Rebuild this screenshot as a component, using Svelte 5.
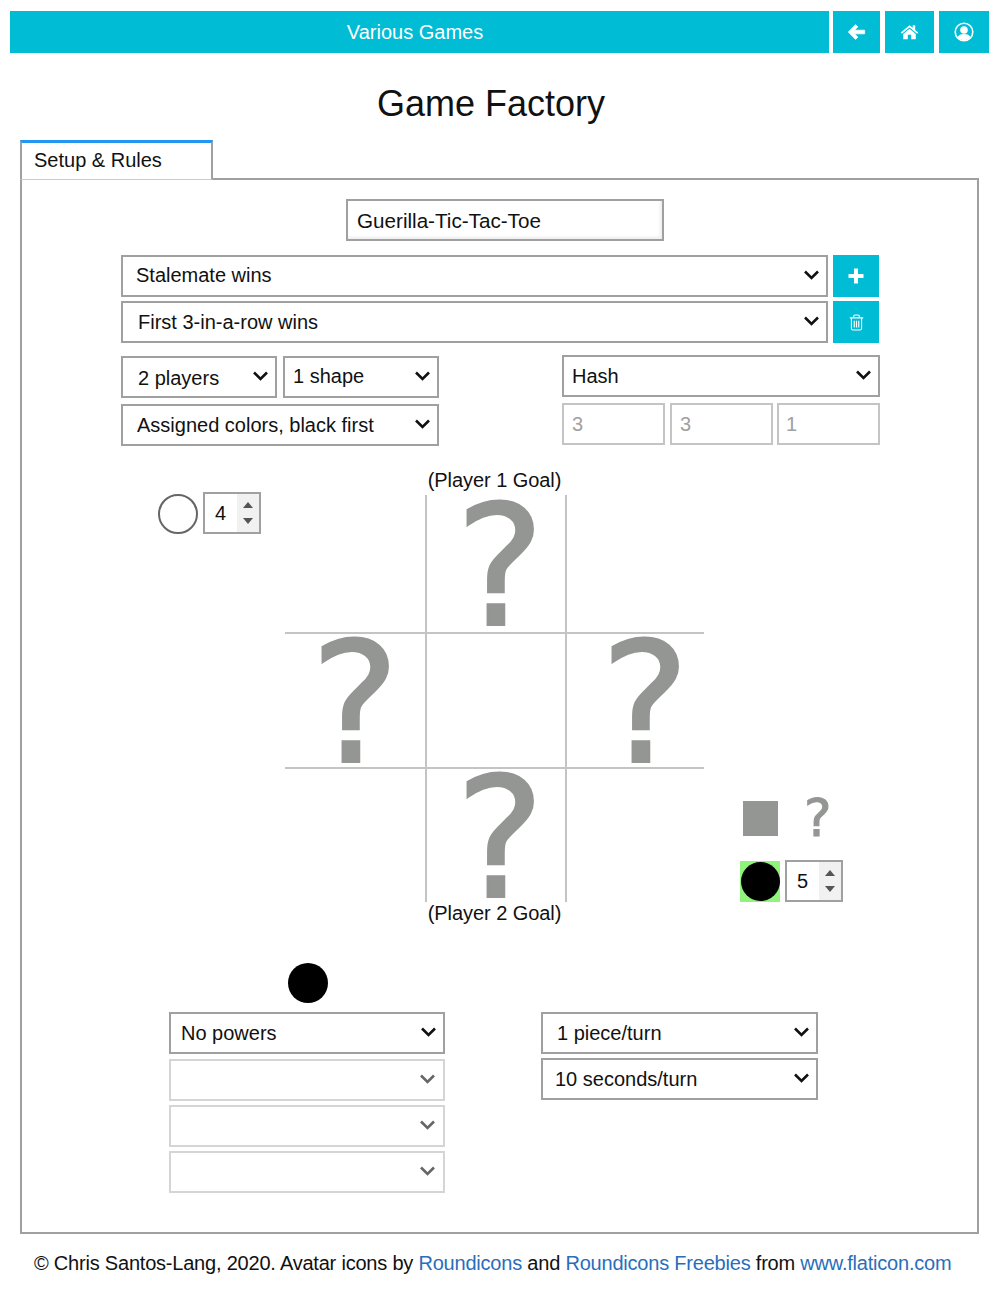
<script>
	const cells = [false, true, false, true, false, true, false, true, false];
</script>

{#snippet chevron()}
	<svg class="chevron" viewBox="0 0 16 10" aria-hidden="true">
		<polyline points="1.5,1.5 8,8 14.5,1.5" />
	</svg>
{/snippet}

{#snippet dropdown(value, cls = '', disabled = false)}
	<div class="dropdown {cls}" class:off={disabled}>
		<select {disabled}>
			<option>{value}</option>
		</select>
		{@render chevron()}
	</div>
{/snippet}

{#snippet spinner(value)}
	<div class="spinner">
		<span class="spin-value">{value}</span>
		<span class="spin-arrows">
			<svg viewBox="0 0 10 6" aria-hidden="true"><polygon points="5,0 10,6 0,6" /></svg>
			<svg viewBox="0 0 10 6" aria-hidden="true"><polygon points="0,0 10,0 5,6" /></svg>
		</span>
	</div>
{/snippet}

<div class="page">
	<header class="topbar">
		<div class="bar-title">Various Games</div>
		<button class="bar-btn first" aria-label="Back">
			<svg viewBox="0 0 20 18" width="19" height="18">
				<path d="M9 1.2 1.4 9 9 16.8 11.4 14.4 8 10.9H18.6V7.1H8L11.4 3.6Z" fill="#fff" stroke="#fff" stroke-width="0.8" stroke-linejoin="round" />
			</svg>
		</button>
		<button class="bar-btn second" aria-label="Home">
			<svg viewBox="0 0 20 16" width="19" height="16">
				<path d="M10 0.8 0.8 8.4 2 9.8 10 3.2 18 9.8 19.2 8.4 16 5.8V1H13.4V3.6Z" fill="#fff" />
				<path d="M3.4 10 10 4.6 16.6 10V15.6H11.8V11H8.2V15.6H3.4Z" fill="#fff" />
			</svg>
		</button>
		<button class="bar-btn third" aria-label="Account">
			<svg viewBox="0 0 20 20" width="20" height="20">
				<circle cx="10" cy="10" r="8.8" fill="none" stroke="#fff" stroke-width="1.6" />
				<circle cx="10" cy="8" r="3.8" fill="#fff" />
				<path d="M3.6 15.2C5 12.6 7.4 12 10 12S15 12.6 16.4 15.2C14.8 17.2 12.6 18.2 10 18.2S5.2 17.2 3.6 15.2Z" fill="#fff" />
			</svg>
		</button>
	</header>

	<h1>Game Factory</h1>

	<div class="tab">Setup &amp; Rules</div>

	<main class="panel">
		<div class="name-row">
			<input class="name" value="Guerilla-Tic-Tac-Toe" readonly />
		</div>

		<div class="rule-rows">
			{@render dropdown('Stalemate wins', 'pad-a up')}
			<button class="square-btn" aria-label="Add rule">
				<svg viewBox="0 0 16 16" width="16" height="16">
					<path d="M6 0.5H10V6H15.5V10H10V15.5H6V10H0.5V6H6Z" fill="#fff" />
				</svg>
			</button>
			{@render dropdown('First 3-in-a-row wins', 'pad-b')}
			<button class="square-btn" aria-label="Delete rule">
				<svg viewBox="0 0 16 18" width="15" height="17" fill="none" stroke="#fff" stroke-width="1.2">
					<path d="M0.8 4H15.2M5 4V2.4Q5 1 6.4 1H9.6Q11 1 11 2.4V4" />
					<path d="M2.6 4V15.4Q2.6 17 4.2 17H11.8Q13.4 17 13.4 15.4V4" />
					<path d="M5.6 7V14.4M8 7V14.4M10.4 7V14.4" />
				</svg>
			</button>
		</div>

		<div class="setup">
			<div class="setup-left">
				{@render dropdown('2 players', 'pad-b low')}
				{@render dropdown('1 shape', 'pad-c up')}
				{@render dropdown('Assigned colors, black first', 'wide pad-d')}
			</div>
			<div class="setup-right">
				{@render dropdown('Hash', 'wide pad-c')}
				<input class="size" value="3" disabled />
				<input class="size" value="3" disabled />
				<input class="size" value="1" disabled />
			</div>
		</div>

		<section class="game">
			<div class="side-left">
				<span class="piece hollow"></span>
				{@render spinner(4)}
			</div>

			<div class="board-wrap">
				<div class="goal top">(Player 1 Goal)</div>
				<div class="board">
					{#each cells as mark}
						<div class="cell">
							{#if mark}<span class="mark">?</span>{/if}
						</div>
					{/each}
				</div>
				<div class="goal bottom">(Player 2 Goal)</div>
			</div>

			<div class="side-right">
				<div class="shape-row">
					<span class="square"></span>
					<span class="small-mark">?</span>
				</div>
				<div class="count-row">
					<span class="green"><span class="piece solid"></span></span>
					{@render spinner(5)}
				</div>
			</div>
		</section>

		<div class="powers-piece"><span class="piece solid"></span></div>

		<section class="options">
			<div class="stack powers">
				{@render dropdown('No powers', 'pad-e')}
				{@render dropdown('', '', true)}
				{@render dropdown('', '', true)}
				{@render dropdown('', '', true)}
			</div>
			<div class="stack">
				{@render dropdown('1 piece/turn', 'pad-f')}
				{@render dropdown('10 seconds/turn', 'pad-g')}
			</div>
		</section>
	</main>

	<footer>
		© Chris Santos-Lang, 2020. Avatar icons by <a href="#top">Roundicons</a> and
		<a href="#top">Roundicons Freebies</a> from <a href="#top">www.flaticon.com</a>
	</footer>
</div>

<style>
	:global(body) {
		background: #fff;
	}

	.page {
		width: 998px;
		height: 1293px;
		box-sizing: border-box;
		padding-top: 11px;
		font-family: 'Liberation Sans', Arial, sans-serif;
		font-size: 20px;
		color: #111;
		overflow: hidden;
	}

	.topbar {
		display: flex;
		height: 42px;
		margin: 0 9px 0 10px;
	}

	.bar-title {
		width: 819px;
		background: #00bcd4;
		color: #fff;
		display: flex;
		align-items: center;
		justify-content: center;
		padding-right: 9px;
		box-sizing: border-box;
	}

	.bar-btn,
	.square-btn {
		background: #00bcd4;
		border: none;
		padding: 0;
		display: flex;
		align-items: center;
		justify-content: center;
	}

	.bar-btn.first {
		width: 47px;
		margin-left: 4px;
	}

	.bar-btn.second {
		width: 49px;
		margin-left: 5px;
	}

	.bar-btn.third {
		width: 50px;
		margin-left: 5px;
	}

	h1 {
		margin: 29px 0 0;
		padding-right: 16px;
		font-size: 36px;
		font-weight: 400;
		line-height: 44px;
		text-align: center;
		color: #111;
	}

	.tab {
		width: 193px;
		height: 40px;
		margin: 14px 0 -2px 20px;
		box-sizing: border-box;
		position: relative;
		z-index: 1;
		background: #fff;
		border-top: 3px solid #2196f3;
		border-left: 2px solid #a0a0a0;
		border-right: 2px solid #a0a0a0;
		border-bottom: 1px solid #ccc;
		padding: 4px 0 0 12px;
		line-height: 26px;
	}

	.panel {
		width: 959px;
		height: 1056px;
		margin-left: 20px;
		box-sizing: border-box;
		border: 2px solid #a0a0a0;
		padding-top: 19px;
	}

	.name-row {
		display: flex;
		padding-left: 324px;
	}

	input,
	select {
		font: inherit;
		color: #111;
		background: #fff;
		box-sizing: border-box;
		border-radius: 0;
		outline: none;
	}

	.name {
		width: 318px;
		height: 42px;
		border: 2px solid #a0a0a0;
		padding: 2px 9px 0;
		font-size: 20.65px;
		box-shadow: inset -2px -2px 3px #eee;
	}

	.rule-rows {
		display: grid;
		grid-template-columns: 707px 46px;
		column-gap: 5px;
		row-gap: 4px;
		margin: 14px 0 0 99px;
	}

	.square-btn {
		height: 42px;
	}

	.dropdown {
		position: relative;
		height: 42px;
	}

	.dropdown select {
		width: 100%;
		height: 100%;
		appearance: none;
		border: 2px solid #a0a0a0;
		padding: 0 30px 0 9px;
	}

	.dropdown.off select {
		border-color: #c4c4c4;
	}

	.chevron {
		position: absolute;
		right: 8px;
		top: 15px;
		width: 17px;
		height: 10px;
		pointer-events: none;
	}

	.chevron polyline {
		fill: none;
		stroke: #111;
		stroke-width: 2.6;
	}

	.dropdown.off .chevron {
		right: 9px;
	}

	.dropdown.off .chevron polyline {
		stroke: #666;
	}

	.pad-a select { padding-left: 13px; }
	.pad-b select { padding-left: 15px; }
	.pad-c select { padding-left: 8px; }
	.pad-d select { padding-left: 14px; }
	.pad-e select { padding-left: 10px; }
	.pad-f select { padding-left: 14px; }
	.pad-g select { padding-left: 12px; }

	.low select {
		padding-top: 2px;
	}

	.up select {
		padding-bottom: 2px;
	}

	.setup {
		display: flex;
		margin: 12px 0 0 99px;
	}

	.setup-left {
		display: grid;
		grid-template-columns: 156px 156px;
		column-gap: 6px;
		row-gap: 6px;
		width: 318px;
		margin-top: 1px;
	}

	.setup-left .wide {
		grid-column: 1 / 3;
	}

	.setup-right {
		display: grid;
		grid-template-columns: 103px 103px 103px;
		column-gap: 5px;
		row-gap: 6px;
		margin-left: 123px;
		align-content: start;
	}

	.setup-right .wide {
		grid-column: 1 / 4;
		width: 318px;
	}

	.size {
		height: 42px;
		width: 100%;
		border: 2px solid #c4c4c4;
		padding: 0 9px 0 8px;
	}

	.size:last-child {
		margin-left: -1px;
		padding-left: 7px;
	}

	.size:disabled {
		color: #a0a0a0;
		background: #fff;
	}

	.game {
		display: grid;
		grid-template-columns: 263px 419px 1fr;
		margin-top: 23px;
	}

	.side-left {
		display: flex;
		align-items: flex-end;
		gap: 5px;
		padding: 23px 0 0 136px;
		align-self: start;
	}

	.piece {
		display: block;
		width: 40px;
		height: 40px;
		box-sizing: border-box;
		border-radius: 50%;
		flex: none;
	}

	.piece.hollow {
		border: 2px solid #666;
		background: #fff;
	}

	.piece.solid {
		background: #000;
	}

	.spinner {
		display: flex;
		width: 58px;
		height: 42px;
		box-sizing: border-box;
		border: 2px solid #a0a0a0;
		flex: none;
	}

	.spin-value {
		flex: 1;
		padding-left: 10px;
		line-height: 38px;
	}

	.spin-arrows {
		width: 22px;
		background: #f1f1f1;
		display: flex;
		flex-direction: column;
		align-items: center;
		justify-content: center;
		gap: 10px;
	}

	.spin-arrows svg {
		width: 10px;
		height: 6px;
		fill: #555;
		display: block;
	}

	.board-wrap {
		display: flex;
		flex-direction: column;
	}

	.goal {
		line-height: 22px;
		height: 22px;
		text-align: center;
		letter-spacing: -0.05px;
	}

	.goal.top {
		margin-bottom: 4px;
	}

	.board {
		display: grid;
		grid-template-columns: 140px 142px 137px;
		grid-template-rows: 139px 133px 135px;
	}

	.cell {
		display: flex;
		align-items: center;
		justify-content: center;
		box-sizing: border-box;
		border-color: #c4c4c4;
		border-style: solid;
		border-width: 0;
	}

	.cell:nth-child(3n + 2) {
		border-left-width: 2px;
		border-right-width: 2px;
	}

	.cell:nth-child(-n + 3) {
		border-bottom-width: 2px;
	}

	.cell:nth-child(n + 7) {
		border-top-width: 2px;
	}

	.cell:nth-child(2),
	.cell:nth-child(8) {
		padding-left: 8px;
	}

	.cell:nth-child(6) {
		padding-left: 19px;
	}

	.mark {
		font-family: 'DejaVu Sans', sans-serif;
		font-size: 168px;
		line-height: 100px;
		height: 100px;
		margin-top: 6px;
		color: #949693;
		-webkit-text-stroke: 2px #949693;
		display: block;
	}

	.side-right {
		align-self: end;
		padding-left: 36px;
		margin-bottom: 22px;
	}

	.shape-row {
		display: flex;
		align-items: center;
		gap: 26px;
		padding-left: 3px;
		height: 44px;
	}

	.square {
		width: 35px;
		height: 35px;
		background: #949693;
		display: block;
	}

	.small-mark {
		font-family: 'DejaVu Sans', sans-serif;
		font-size: 52px;
		line-height: 44px;
		color: #949693;
		-webkit-text-stroke: 1px #949693;
	}

	.count-row {
		display: flex;
		align-items: flex-end;
		gap: 5px;
		margin-top: 20px;
	}

	.green {
		display: flex;
		align-items: center;
		justify-content: center;
		width: 40px;
		height: 41px;
		background: #90f47a;
		flex: none;
	}

	.green .piece {
		width: 39px;
		height: 39px;
	}

	.powers-piece {
		margin: 39px 0 0 266px;
	}

	.options {
		display: flex;
		margin: 9px 0 0 147px;
	}

	.stack {
		display: flex;
		flex-direction: column;
		gap: 4px;
		width: 276px;
	}

	.stack + .stack {
		margin-left: 96px;
		width: 277px;
	}

	.powers .dropdown:nth-child(2) {
		margin-top: 1px;
	}

	footer {
		margin: 17px 0 0 34px;
		white-space: nowrap;
		line-height: 24px;
		letter-spacing: -0.21px;
	}

	footer a {
		color: #2a6ebb;
		text-decoration: none;
	}
</style>
